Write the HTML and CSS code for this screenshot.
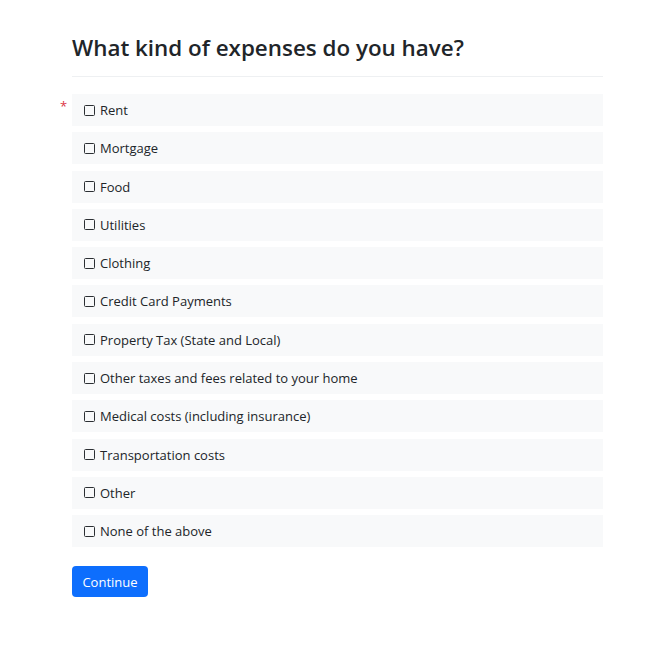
FILE: index.html
```html
<!DOCTYPE html>
<html>
<head>
<meta charset="utf-8">
<link rel="stylesheet" href="styles.css">
</head>
<body>
<main class="page">
  <h1 class="title">What kind of expenses do you have?</h1>
  <hr class="rule">
  <div class="question">
    <span class="req">*</span>
    <ul class="options">
      <li class="opt"><span class="box"></span>Rent</li>
      <li class="opt"><span class="box"></span>Mortgage</li>
      <li class="opt"><span class="box"></span>Food</li>
      <li class="opt"><span class="box"></span>Utilities</li>
      <li class="opt"><span class="box"></span>Clothing</li>
      <li class="opt"><span class="box"></span>Credit Card Payments</li>
      <li class="opt"><span class="box"></span>Property Tax (State and Local)</li>
      <li class="opt"><span class="box"></span>Other taxes and fees related to your home</li>
      <li class="opt"><span class="box"></span>Medical costs (including insurance)</li>
      <li class="opt"><span class="box"></span>Transportation costs</li>
      <li class="opt"><span class="box"></span>Other</li>
      <li class="opt"><span class="box"></span>None of the above</li>
    </ul>
  </div>
  <button class="btn">Continue</button>
</main>
</body>
</html>
```

FILE: styles.css
```css
html, body {
  margin: 0;
  padding: 0;
  background: #fff;
}
body {
  font-family: "Open Sans", "Noto Sans", sans-serif;
  color: #212529;
}
.page {
  width: 531px;
  margin-left: 72px;
  padding-top: 30px;
}
.title {
  margin: 0;
  font-size: 22.4px;
  font-weight: 600;
  line-height: 36px;
  color: #212529;
}
.rule {
  margin: 10px 0 17px;
  border: 0;
  border-top: 1px solid #eef0f2;
}
.question {
  position: relative;
}
.req {
  position: absolute;
  left: -12px;
  top: 3px;
  color: #dc3545;
  font-size: 13px;
}
.options {
  list-style: none;
  margin: 0;
  padding: 0;
  display: flex;
  flex-direction: column;
  gap: 6.3px;
}
.opt {
  height: 32px;
  background: #f8f9fa;
  display: flex;
  align-items: center;
  padding-left: 12px;
  font-size: 13px;
  font-weight: 500;
  color: #212529;
}
.box {
  width: 9px;
  height: 9px;
  border: 1.2px solid #2b2f33;
  border-radius: 1.5px;
  margin-right: 5px;
  flex: none;
}
.btn {
  margin-top: 19px;
  height: 31px;
  width: 76px;
  background: #0d6efd;
  color: #fff;
  border: 0;
  border-radius: 4px;
  font-family: "Open Sans", sans-serif;
  font-size: 13px;
  font-weight: 500;
  padding: 0;
}
```
